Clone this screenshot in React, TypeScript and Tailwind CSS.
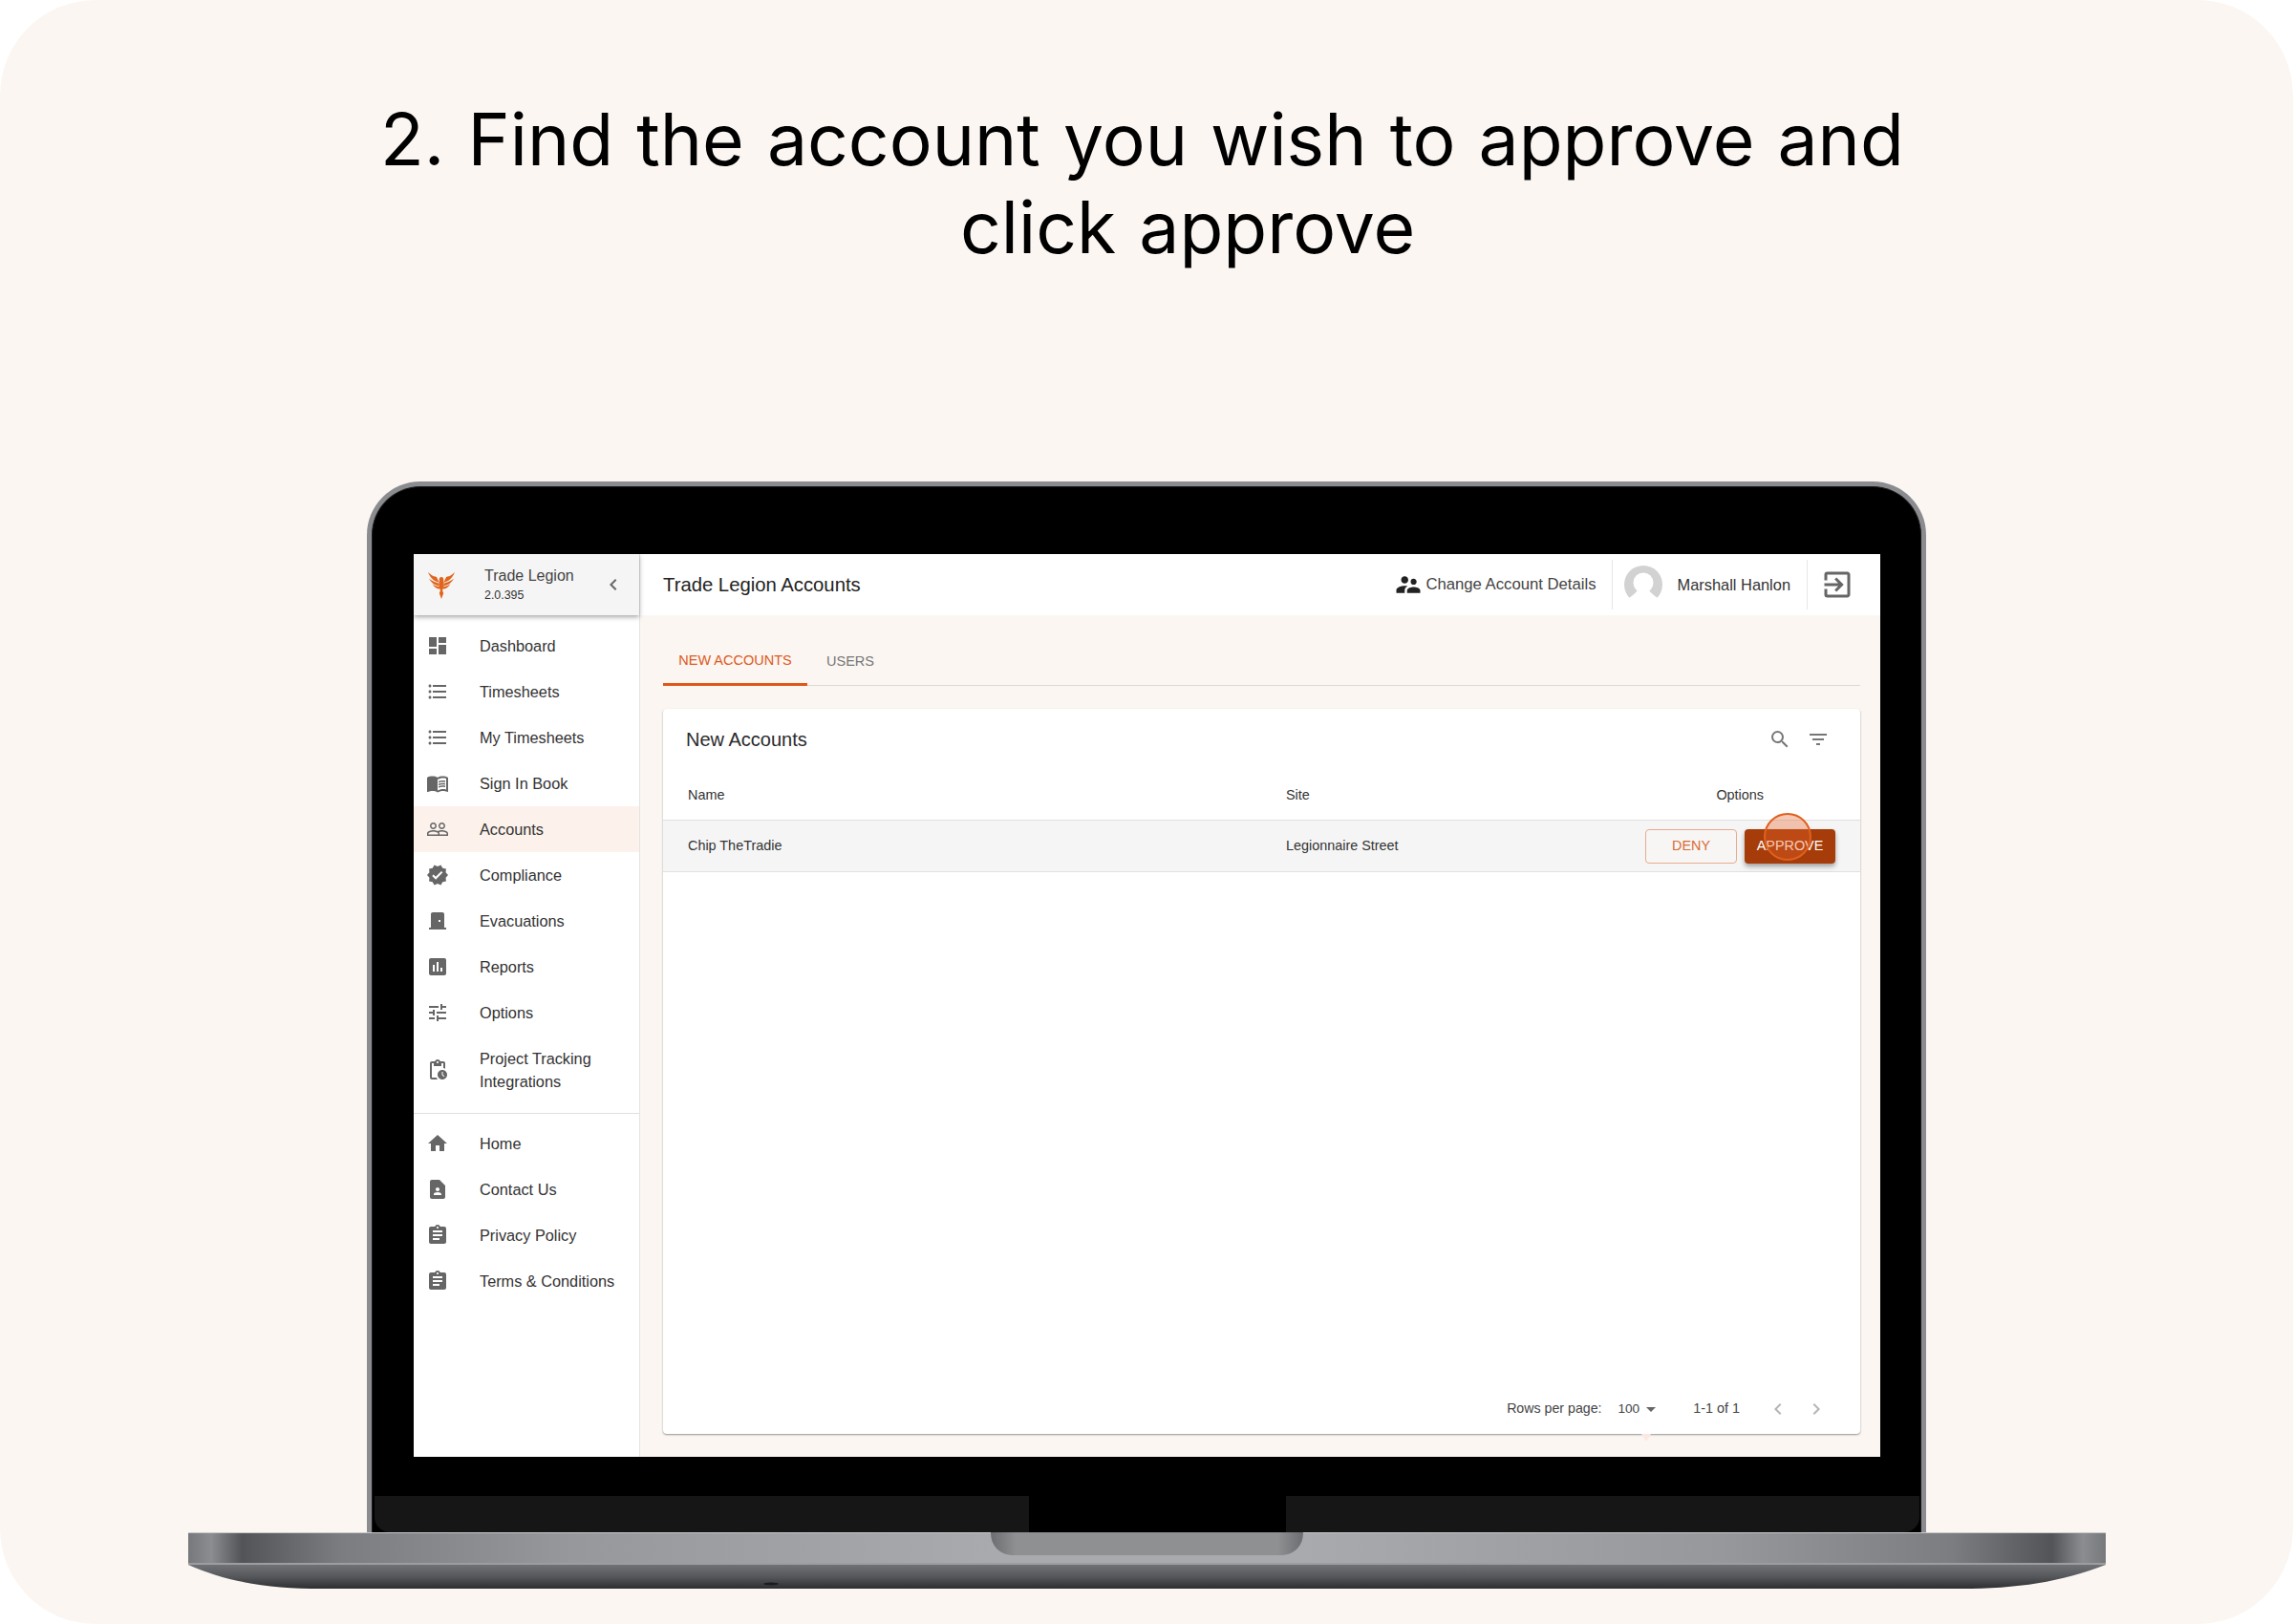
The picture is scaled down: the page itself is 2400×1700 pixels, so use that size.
import type { ReactNode } from "react";
import {
  MdDashboard, MdFormatListBulleted, MdMenuBook, MdPeopleOutline, MdVerified, MdDoorFront, MdAssessment, MdTune,
  MdOutlinePendingActions, MdHome, MdContactPage, MdAssignment, MdSupervisorAccount, MdExitToApp,
  MdSearch, MdFilterList, MdArrowDropDown, MdChevronLeft, MdChevronRight,
} from "react-icons/md";

const mainNav = [
  { label: "Dashboard", icon: <MdDashboard size={24} /> },
  { label: "Timesheets", icon: <MdFormatListBulleted size={24} /> },
  { label: "My Timesheets", icon: <MdFormatListBulleted size={24} /> },
  { label: "Sign In Book", icon: <MdMenuBook size={24} /> },
  { label: "Accounts", icon: <MdPeopleOutline size={24} />, active: true },
  { label: "Compliance", icon: <MdVerified size={24} /> },
  { label: "Evacuations", icon: <MdDoorFront size={24} /> },
  { label: "Reports", icon: <MdAssessment size={24} /> },
  { label: "Options", icon: <MdTune size={24} /> },
];

const bottomNav = [
  { label: "Home", icon: <MdHome size={24} /> },
  { label: "Contact Us", icon: <MdContactPage size={24} /> },
  { label: "Privacy Policy", icon: <MdAssignment size={24} /> },
  { label: "Terms & Conditions", icon: <MdAssignment size={24} /> },
];

function NavRow({ label, icon, active }: { label: ReactNode; icon: ReactNode; active?: boolean }) {
  return (
    <div className={`flex h-12 items-center pl-[13px] ${active ? "bg-[#fcf1eb]" : ""}`}>
      <span className="w-[56px] shrink-0 text-[#666666]">{icon}</span>
      <span className="text-[16.3px] leading-6 text-[#333333]">{label}</span>
    </div>
  );
}

function PhoenixLogo() {
  return (
    <svg width="28" height="30" viewBox="0 0 28 30" fill="#e0661e">
      <path d="M0 2 L3 4.5 C5 6 7 6.5 9 7 L11.5 12.5 C7 12 2.5 8.5 0 2Z" />
      <path d="M1 8.5 C4 11 7 12.5 10.5 13.2 L12 16 C7.5 16 3.5 13.5 1 8.5Z" />
      <path d="M4.5 14.5 C7 16 9.5 16.8 11.5 16.8 L12.5 19.5 C9.5 19.5 6.5 17.5 4.5 14.5Z" />
      <path d="M28 2 L25 4.5 C23 6 21 6.5 19 7 L16.5 12.5 C21 12 25.5 8.5 28 2Z" />
      <path d="M27 8.5 C24 11 21 12.5 17.5 13.2 L16 16 C20.5 16 24.5 13.5 27 8.5Z" />
      <path d="M23.5 14.5 C21 16 18.5 16.8 16.5 16.8 L15.5 19.5 C18.5 19.5 21.5 17.5 23.5 14.5Z" />
      <path d="M14 7 C12.4 7 11.2 8.6 11.8 10.4 C10.8 14 11.4 18 13 21 L11.8 24 L14 30 L16.2 24 L15 21 C16.6 18 17.2 14 16.2 10.4 C16.8 8.6 15.6 7 14 7Z" />
    </svg>
  );
}

function Avatar() {
  return (
    <svg width="40" height="40" viewBox="0 0 40 40">
      <circle cx="20" cy="20" r="20" fill="#d2d2d2" />
      <circle cx="20" cy="18" r="10.5" fill="#ffffff" />
      <path d="M14 26 C12 29 9 31 5 34 L5 40 L35 40 L35 34 C31 31 28 29 26 26Z" fill="#ffffff" />
    </svg>
  );
}

function LaptopBase() {
  return (
    <svg width="2007" height="59" viewBox="0 0 2007 59" className="block">
      <defs>
        <linearGradient id="band" x1="0" x2="1" y1="0" y2="0">
          <stop offset="0" stopColor="#77787b" />
          <stop offset="0.012" stopColor="#8c8d90" />
          <stop offset="0.028" stopColor="#535458" />
          <stop offset="0.08" stopColor="#7c7d81" />
          <stop offset="0.2" stopColor="#97989b" />
          <stop offset="0.42" stopColor="#a9aaad" />
          <stop offset="0.58" stopColor="#a9aaad" />
          <stop offset="0.8" stopColor="#97989b" />
          <stop offset="0.92" stopColor="#7c7d81" />
          <stop offset="0.972" stopColor="#535458" />
          <stop offset="0.988" stopColor="#8c8d90" />
          <stop offset="1" stopColor="#77787b" />
        </linearGradient>
        <linearGradient id="foot" x1="0" x2="0" y1="0" y2="1">
          <stop offset="0" stopColor="#707276" />
          <stop offset="0.5" stopColor="#55575a" />
          <stop offset="1" stopColor="#2d2e31" />
        </linearGradient>
        <linearGradient id="notch" x1="0" x2="1" y1="0" y2="0">
          <stop offset="0" stopColor="#6c6d70" />
          <stop offset="0.08" stopColor="#8f9092" />
          <stop offset="0.92" stopColor="#8f9092" />
          <stop offset="1" stopColor="#6c6d70" />
        </linearGradient>
      </defs>
      <rect width="2007" height="33" fill="url(#band)" />
      <rect width="2007" height="1" fill="#c8c9cb" />
      <path d="M840 0 H1167 C1167 14 1158 24 1143 24 H864 C849 24 840 14 840 0Z" fill="url(#notch)" />
      <path d="M0 34 H2007 C1960 52 1915 59 1855 59 H140 C85 59 40 52 0 34Z" fill="url(#foot)" />
      <rect y="32" width="2007" height="2" fill="#9c9da0" />
      <ellipse cx="610" cy="54" rx="8" ry="1.5" fill="#1c1c1e" />
    </svg>
  );
}

function Screen() {
  return (
    <div className="flex h-[945px] w-[1535px] bg-[#fbf6f1] font-['Liberation_Sans',Arial,sans-serif]">
      <aside className="relative w-[237px] shrink-0 border-r border-[#e4e4e4] bg-white">
        <div className="relative z-10 flex h-16 items-center bg-[#f5f5f5] shadow-[0_2px_5px_rgba(0,0,0,0.35)]">
          <div className="ml-[15px] w-[28px]"><PhoenixLogo /></div>
          <div className="ml-[31px]">
            <div className="text-base leading-[22px] text-[#444444]">Trade Legion</div>
            <div className="text-[12.4px] leading-[18px] text-[#333333]">2.0.395</div>
          </div>
          <MdChevronLeft size={24} className="ml-[29px] text-[#666666]" />
        </div>
        <nav className="pt-[8px]">
          {mainNav.map((item) => (
            <NavRow key={item.label} {...item} />
          ))}
          <div className="flex h-[72px] items-center pl-[13px]">
            <span className="w-[56px] shrink-0 text-[#666666]"><MdOutlinePendingActions size={24} /></span>
            <span className="text-[16.3px] leading-6 text-[#333333]">Project Tracking<br />Integrations</span>
          </div>
          <div className="mt-[9px] border-t border-[#e0e0e0] pt-[7px]">
            {bottomNav.map((item) => (
              <NavRow key={item.label} {...item} />
            ))}
          </div>
        </nav>
      </aside>

      <div className="flex min-w-0 flex-1 flex-col">
        <header className="flex h-16 items-center bg-white pl-[24px]">
          <h1 className="flex-1 pt-[1px] text-[20.3px] text-[#222222]">Trade Legion Accounts</h1>
          <MdSupervisorAccount size={30} className="text-[#222222]" />
          <span className="ml-[3px] text-[16.7px] text-[#444444]">Change Account Details</span>
          <div className="ml-[16px] h-[52px] border-l border-[#e6e6e6]" />
          <div className="ml-[12px]"><Avatar /></div>
          <span className="ml-[16px] text-[16.4px] text-[#333333]">Marshall Hanlon</span>
          <div className="ml-[17px] h-[52px] border-l border-[#e6e6e6]" />
          <MdExitToApp size={36} className="ml-[13px] mr-[27px] text-[#666666]" />
        </header>

        <div className="flex flex-1 flex-col pl-[24px] pr-[21px]">
          <div className="flex h-[74px] border-b border-[#e0d9d3]">
            <div className="flex h-[74px] w-[151px] items-center justify-center border-b-[3px] border-[#e0571c] pt-[25px] text-[14.5px] text-[#dd5a22]">
              NEW ACCOUNTS
            </div>
            <div className="ml-[20px] flex h-[74px] items-center pt-[23px] text-[14.5px] text-[#777777]">USERS</div>
          </div>

          <div className="relative mt-[24px] flex h-[759px] flex-col rounded bg-white shadow-[0_1px_2px_rgba(0,0,0,0.4)]">
            <div className="flex h-[63px] items-center pl-[24px] pr-[32px]">
              <h2 className="flex-1 text-xl text-[#2b2b2b]">New Accounts</h2>
              <MdSearch size={24} className="text-[#777777]" />
              <MdFilterList size={24} className="ml-[16px] text-[#777777]" />
            </div>
            <div className="flex h-[54px] items-center border-b border-[#e0e0e0] pl-[26px] pt-[2px] pr-[101px] text-[14.4px] text-[#333333]">
              <span className="w-[626px]">Name</span>
              <span className="flex-1">Site</span>
              <span>Options</span>
            </div>
            <div className="flex h-[54px] items-center border-b border-[#e0e0e0] bg-[#f5f5f5] pl-[26px] pr-[26px] text-[14.4px] text-[#333333]">
              <span className="w-[626px]">Chip TheTradie</span>
              <span className="flex-1">Legionnaire Street</span>
              <button className="h-[36px] w-[96px] rounded border border-[#e8ab8d] bg-[#f8f6f4] text-[14.4px] text-[#d96b35]">DENY</button>
              <div className="relative ml-[8px]">
                <button className="h-[36px] w-[95px] rounded bg-[#a63c09] text-[14.4px] text-white shadow-[0_3px_5px_rgba(0,0,0,0.35)]">APPROVE</button>
                <div className="absolute left-[20px] top-[-17px] h-[50px] w-[50px] rounded-full border-2 border-[#e0601e] bg-[#e8642a]/35" />
              </div>
            </div>
            <div className="mt-auto flex h-[54px] items-center justify-end pt-[2px] pr-[34px] text-[14.2px] text-[#444444]">
              <span>Rows per page:</span>
              <span className="ml-[17px] text-[13.6px]">100</span>
              <MdArrowDropDown size={24} className="text-[#666666]" />
              <span className="ml-[32px] text-[14.4px]">1-1 of 1</span>
              <MdChevronLeft size={24} className="ml-[28px] text-[#b5b5b5]" />
              <MdChevronRight size={24} className="ml-[16px] text-[#b5b5b5]" />
            </div>
            <div className="absolute bottom-[-8px] left-[1024px] h-0 w-0 border-x-[5px] border-t-[8px] border-x-transparent border-t-[#fbe8e0]" />
          </div>
        </div>
      </div>
    </div>
  );
}

export default function App() {
  return (
    <div className="h-[1700px] w-[2400px] overflow-hidden bg-white">
      <div className="flex h-full flex-col overflow-hidden rounded-[100px] bg-[#fbf6f2]">
        <div className="h-[504px] pt-[100px] font-['Inter',sans-serif] text-[75px] leading-[92px] text-black [word-spacing:3px]">
          <div className="ml-[398px] whitespace-nowrap">2. Find the account you wish to approve and</div>
          <div className="ml-[1005px] whitespace-nowrap">click approve</div>
        </div>

        <div className="ml-[384px] h-[1100px] w-[1632px] rounded-t-[56px] bg-[#8b8c8f] px-[5px] pt-[5px]">
          <div className="flex h-full flex-col rounded-t-[51px] border border-b-0 border-[#1c1c1c] bg-black pt-[70px] pl-[43px]">
            <Screen />
            <div className="-ml-[41px] mr-[1px] mt-[41px] flex h-[38px] items-start overflow-hidden rounded-b-[16px]">
              <div className="h-[38px] w-[685px] bg-[#161616]" />
              <div className="h-[35px] w-[269px] bg-black" />
              <div className="h-[38px] flex-1 bg-[#161616]" />
            </div>
          </div>
        </div>

        <div className="ml-[197px]">
          <LaptopBase />
        </div>
      </div>
    </div>
  );
}
